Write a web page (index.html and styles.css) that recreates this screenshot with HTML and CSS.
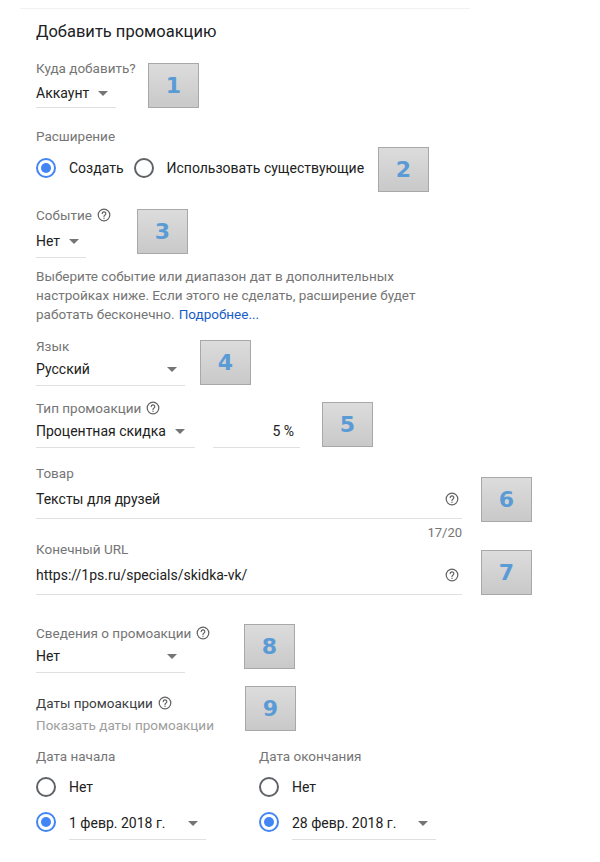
FILE: index.html
```html
<!DOCTYPE html>
<html lang="ru">
<head>
  <meta charset="UTF-8">
  <meta name="viewport" content="width=device-width, initial-scale=1.0">
  <title>Добавить промоакцию</title>
  <link rel="stylesheet" href="styles.css">
</head>
<body>

  <div class="page">
    <div class="top-line"></div>

    <div class="form">
      <h1>Добавить промоакцию</h1>

      <div class="field f-where">
        <div class="label">Куда добавить?</div>
        <div class="select w-80"><span>Аккаунт</span><i class="arrow"></i></div>
      </div>

      <div class="field f-ext">
        <div class="label">Расширение</div>
        <div class="radios">
          <label class="radio checked"><span class="dot"></span>Создать</label>
          <label class="radio"><span class="dot"></span>Использовать существующие</label>
        </div>
      </div>

      <div class="field f-event">
        <div class="label">Событие <svg class="help" viewBox="0 0 14 14"><circle cx="7" cy="7" r="5.8" /><path d="M5.2 5.6a1.8 1.8 0 1 1 2.6 1.6c-.6.3-.8.6-.8 1.3" /><circle class="pt" cx="7" cy="10.3" r=".7" /></svg></div>
        <div class="select w-50"><span>Нет</span><i class="arrow"></i></div>
        <p class="hint"><span class="hint-line">Выберите событие или диапазон дат в дополнительных настройках ниже. Если этого не сделать, расширение будет</span><span class="hint-line">работать бесконечно.<a href="#">Подробнее...</a></span></p>
      </div>

      <div class="field f-lang">
        <div class="label">Язык</div>
        <div class="select w-149 spread"><span>Русский</span><i class="arrow"></i></div>
      </div>

      <div class="field f-type">
        <div class="label">Тип промоакции <svg class="help" viewBox="0 0 14 14"><circle cx="7" cy="7" r="5.8" /><path d="M5.2 5.6a1.8 1.8 0 1 1 2.6 1.6c-.6.3-.8.6-.8 1.3" /><circle class="pt" cx="7" cy="10.3" r=".7" /></svg></div>
        <div class="row">
          <div class="select w-159"><span>Процентная скидка</span><i class="arrow"></i></div>
          <div class="select percent">5 %</div>
        </div>
      </div>

      <div class="field f-product">
        <div class="label">Товар</div>
        <div class="input"><span>Тексты для друзей</span><svg class="help" viewBox="0 0 14 14"><circle cx="7" cy="7" r="5.8" /><path d="M5.2 5.6a1.8 1.8 0 1 1 2.6 1.6c-.6.3-.8.6-.8 1.3" /><circle class="pt" cx="7" cy="10.3" r=".7" /></svg></div>
        <div class="counter">17/20</div>
      </div>

      <div class="field f-url">
        <div class="label">Конечный URL</div>
        <div class="input"><span>https://1ps.ru/specials/skidka-vk/</span><svg class="help" viewBox="0 0 14 14"><circle cx="7" cy="7" r="5.8" /><path d="M5.2 5.6a1.8 1.8 0 1 1 2.6 1.6c-.6.3-.8.6-.8 1.3" /><circle class="pt" cx="7" cy="10.3" r=".7" /></svg></div>
      </div>

      <div class="field f-info">
        <div class="label">Сведения о промоакции <svg class="help" viewBox="0 0 14 14"><circle cx="7" cy="7" r="5.8" /><path d="M5.2 5.6a1.8 1.8 0 1 1 2.6 1.6c-.6.3-.8.6-.8 1.3" /><circle class="pt" cx="7" cy="10.3" r=".7" /></svg></div>
        <div class="select w-149 spread"><span>Нет</span><i class="arrow"></i></div>
      </div>

      <div class="field f-dates">
        <div class="label dark">Даты промоакции <svg class="help" viewBox="0 0 14 14"><circle cx="7" cy="7" r="5.8" /><path d="M5.2 5.6a1.8 1.8 0 1 1 2.6 1.6c-.6.3-.8.6-.8 1.3" /><circle class="pt" cx="7" cy="10.3" r=".7" /></svg></div>
        <div class="sub">Показать даты промоакции</div>
      </div>

      <div class="dates">
        <div class="date-col">
          <div class="label">Дата начала</div>
          <label class="radio date-none"><span class="dot"></span>Нет</label>
          <div class="radio checked date-pick">
            <span class="dot"></span>
            <div class="select w-137 spread"><span>1 февр. 2018 г.</span><i class="arrow"></i></div>
          </div>
        </div>
        <div class="date-col">
          <div class="label">Дата окончания</div>
          <label class="radio date-none"><span class="dot"></span>Нет</label>
          <div class="radio checked date-pick">
            <span class="dot"></span>
            <div class="select w-144 spread"><span>28 февр. 2018 г.</span><i class="arrow"></i></div>
          </div>
        </div>
      </div>
    </div>

    <!-- номера-пометки поверх формы -->
    <div class="mark" style="left:148px;top:63px">1</div>
    <div class="mark" style="left:378px;top:147px">2</div>
    <div class="mark" style="left:137px;top:209px">3</div>
    <div class="mark" style="left:200px;top:340px">4</div>
    <div class="mark" style="left:322px;top:402px">5</div>
    <div class="mark" style="left:481px;top:477px">6</div>
    <div class="mark" style="left:481px;top:550px">7</div>
    <div class="mark" style="left:244px;top:624px">8</div>
    <div class="mark" style="left:245px;top:686px">9</div>
  </div>

</body>
</html>
```

FILE: styles.css
```css
body {
  margin: 0;
  background: #fff;
  font-family: Roboto, "Noto Sans", Arial, sans-serif;
  color: #212121;
}

.page {
  position: relative;
  width: 600px;
  height: 862px;
  overflow: hidden;
}

.top-line {
  margin: 8px 0 0 20px;
  width: 450px;
  height: 1px;
  background: #f1f1f1;
}

.form {
  padding-left: 36px;
}

h1 {
  margin: 13px 0 0;
  font-size: 16.5px;
  font-weight: 400;
  line-height: 20px;
  color: #202124;
}

.label {
  display: flex;
  align-items: center;
  gap: 5px;
  font-size: 13.5px;
  line-height: 18px;
  color: #757575;
}

.label.dark {
  color: #3c4043;
}

.help {
  width: 14px;
  height: 14px;
  flex: none;
  fill: none;
  stroke: #616161;
  stroke-width: 1.2;
  stroke-linecap: round;
}

.help .pt {
  fill: #616161;
  stroke: none;
}

.select {
  display: flex;
  align-items: center;
  box-sizing: border-box;
  height: 31px;
  padding: 4px 0 6px;
  font-size: 14px;
  line-height: 20px;
  border-bottom: 1px solid #e0e0e0;
}

.arrow {
  width: 0;
  height: 0;
  margin-left: 9px;
  border-left: 5px solid transparent;
  border-right: 5px solid transparent;
  border-top: 5px solid #757575;
}

.select.spread {
  justify-content: space-between;
  padding-right: 8px;
}

.w-50 { width: 50px; }
.w-80 { width: 80px; }
.w-137 { width: 137px; }
.w-144 { width: 144px; }
.w-149 { width: 149px; }
.w-159 { width: 159px; }

.row {
  display: flex;
  gap: 18px;
}

.select.percent {
  width: 87px;
  justify-content: flex-end;
  padding-right: 6px;
}

.f-where { margin-top: 17px; }
.f-where .select { padding-top: 6px; padding-bottom: 4px; }

.f-ext { margin-top: 19px; }

.radios {
  display: flex;
  gap: 10px;
  margin-top: 13px;
}

.radio {
  display: flex;
  align-items: center;
  gap: 13px;
  font-size: 14px;
  line-height: 20px;
}

.dot {
  box-sizing: border-box;
  width: 20px;
  height: 20px;
  flex: none;
  border: 2px solid #5f6368;
  border-radius: 50%;
  position: relative;
}

.radio.checked .dot {
  border-color: #4285f4;
}

.radio.checked .dot::after {
  content: "";
  position: absolute;
  left: 3px;
  top: 3px;
  width: 10px;
  height: 10px;
  border-radius: 50%;
  background: #4285f4;
}

.f-event { margin-top: 28px; }
.f-event .select { margin-top: 3px; }

.hint {
  margin: 9px 0 0;
  width: 400px;
  font-size: 13.5px;
  line-height: 19px;
  color: #757575;
}

.hint-line {
  display: block;
}

.hint a {
  margin-left: 4px;
  color: #1a5dc8;
  text-decoration: none;
}

.f-lang { margin-top: 13px; }
.f-type { margin-top: 13px; }

.f-product { margin-top: 16px; }

.input {
  display: flex;
  align-items: center;
  justify-content: space-between;
  box-sizing: border-box;
  width: 426px;
  height: 37px;
  padding: 7px 3px 9px 0;
  font-size: 14px;
  line-height: 20px;
  border-bottom: 1px solid #e0e0e0;
}

.counter {
  width: 426px;
  margin-top: 6px;
  text-align: right;
  font-size: 13px;
  line-height: 16px;
  color: #757575;
}

.f-url { margin-top: -1px; }

.f-info { margin-top: 29px; }

.f-dates { margin-top: 21px; }

.sub {
  margin-top: 4px;
  font-size: 13.5px;
  line-height: 18px;
  color: #9e9e9e;
}

.dates {
  display: flex;
  margin-top: 13px;
}

.date-col {
  width: 223px;
}

.date-none {
  margin-top: 12px;
}

.date-pick {
  margin-top: 6px;
}

.date-pick .select {
  height: 37px;
  padding-top: 10px;
}

.mark {
  position: absolute;
  box-sizing: border-box;
  width: 51px;
  height: 45px;
  display: flex;
  align-items: center;
  justify-content: center;
  background: linear-gradient(#dcdcdc, #c9c9c9);
  border: 1px solid #a8a8a8;
  font-family: "DejaVu Sans", Arial, sans-serif;
  font-size: 22px;
  font-weight: 700;
  color: #5b9bd5;
}
```
